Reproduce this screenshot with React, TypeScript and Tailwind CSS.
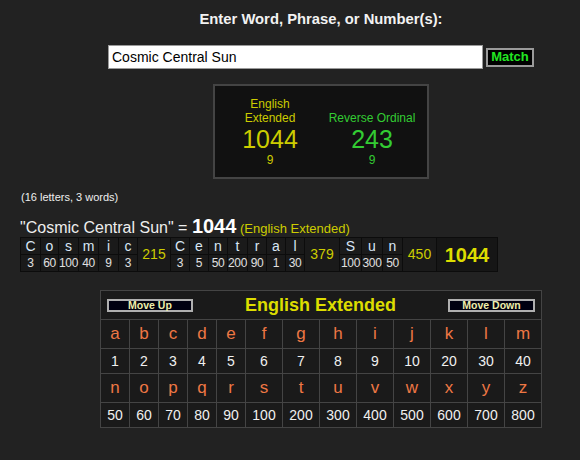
import React from "react";

const font = { fontFamily: '"Liberation Sans", Arial, sans-serif' };

const breakdown: Array<
  | { kind: "l"; ch: string; v: string; w: string }
  | { kind: "s"; v: string; w: string }
> = [
  { kind: "l", ch: "C", v: "3", w: "w-[19px]" },
  { kind: "l", ch: "o", v: "60", w: "w-[17px]" },
  { kind: "l", ch: "s", v: "100", w: "w-[19px]" },
  { kind: "l", ch: "m", v: "40", w: "w-[19px]" },
  { kind: "l", ch: "i", v: "9", w: "w-[19px]" },
  { kind: "l", ch: "c", v: "3", w: "w-[18px]" },
  { kind: "s", v: "215", w: "w-[32px]" },
  { kind: "l", ch: "C", v: "3", w: "w-[18px]" },
  { kind: "l", ch: "e", v: "5", w: "w-[18px]" },
  { kind: "l", ch: "n", v: "50", w: "w-[18px]" },
  { kind: "l", ch: "t", v: "200", w: "w-[19px]" },
  { kind: "l", ch: "r", v: "90", w: "w-[18px]" },
  { kind: "l", ch: "a", v: "1", w: "w-[18px]" },
  { kind: "l", ch: "l", v: "30", w: "w-[18px]" },
  { kind: "s", v: "379", w: "w-[34px]" },
  { kind: "l", ch: "S", v: "100", w: "w-[21px]" },
  { kind: "l", ch: "u", v: "300", w: "w-[20px]" },
  { kind: "l", ch: "n", v: "50", w: "w-[19px]" },
  { kind: "s", v: "450", w: "w-[33px]" },
];

const row1 = "abcdefghijklm".split("");
const row1v = ["1", "2", "3", "4", "5", "6", "7", "8", "9", "10", "20", "30", "40"];
const row2 = "nopqrstuvwxyz".split("");
const row2v = ["50", "60", "70", "80", "90", "100", "200", "300", "400", "500", "600", "700", "800"];

export default function App() {
  return (
    <div
      className="w-[580px] h-[460px] bg-[#222222] text-white overflow-hidden"
      style={font}
    >
      <div className="flex flex-col items-center pl-[62px]">
        <div className="pt-[10px] text-[14.8px] leading-[18px] font-bold text-[#f2f2f2]">
          Enter Word, Phrase, or Number(s):
        </div>
        <div className="mt-[17px] flex items-center gap-[3px]">
          <div className="w-[375px] h-[24px] bg-white border border-[#9a9a9a] flex items-center pl-[3px] text-[14px] text-black">
            Cosmic Central Sun
          </div>
          <div className="w-[48px] h-[19px] bg-black border-2 border-[#9a9a9a] flex items-center justify-center text-[13px] font-bold text-[#22e622]">
            Match
          </div>
        </div>
        <div className="mt-[15px] w-[216px] h-[95px] bg-[#111111] border-2 border-[#444444] pt-[11px]">
          <div className="grid grid-cols-[90px_90px] gap-x-[12px] justify-center text-center">
            <div className="flex flex-col items-center text-[#cccc00]">
              <div className="h-[28px] flex flex-col justify-end text-[12px] leading-[14px]">
                <span>English</span>
                <span>Extended</span>
              </div>
              <div className="text-[25px] leading-[28px]">1044</div>
              <div className="text-[12px] leading-[14px]">9</div>
            </div>
            <div className="flex flex-col items-center text-[#33cc33]">
              <div className="h-[28px] flex flex-col justify-end text-[12px] leading-[14px]">
                <span>Reverse Ordinal</span>
              </div>
              <div className="text-[25px] leading-[28px]">243</div>
              <div className="text-[12px] leading-[14px]">9</div>
            </div>
          </div>
        </div>
      </div>

      <div className="pl-[21px] mt-[12px] text-[11px] leading-[13px] text-[#eeeeee]">
        (16 letters, 3 words)
      </div>
      <div className="pl-[20px] mt-[7px] h-[22px] flex items-baseline text-[16px] text-[#eeeeee] whitespace-pre">
        <span>"Cosmic Central Sun" = </span>
        <span className="text-[20px] font-bold text-white">1044</span>
        <span className="text-[13px] text-[#cccc00]"> (English Extended)</span>
      </div>
      <div className="ml-[20px] mt-[4px] inline-flex bg-[#0c0c0c] p-px gap-px">
        {breakdown.map((c, i) =>
          c.kind === "l" ? (
            <div key={i} className={`flex flex-col gap-px ${c.w}`}>
              <div className="h-[16px] bg-[#1a1a1a] flex items-center justify-center text-[14px] text-[#d8e6f5]">
                {c.ch}
              </div>
              <div className="h-[16px] bg-[#1a1a1a] flex items-center justify-center text-[12px] text-[#e0e0e0] tracking-[-0.3px]">
                {c.v}
              </div>
            </div>
          ) : (
            <div
              key={i}
              className={`${c.w} bg-[#1a1a1a] flex items-center justify-center text-[14px] text-[#cccc00]`}
            >
              {c.v}
            </div>
          )
        )}
        <div className="w-[60px] bg-[#161616] flex items-center justify-center text-[20px] font-bold text-[#dddd00]">
          1044
        </div>
      </div>

      <div className="flex flex-col items-center pl-[62px] mt-[18px]">
        <div className="w-[442px] bg-[#444444] border border-[#444444] flex flex-col gap-px">
          <div className="h-[28px] bg-[#1a1a1a] flex items-center justify-between px-[6px]">
            <div className="w-[86px] h-[13px] bg-[#000010] border-2 border-[#b0b0b0] flex items-center justify-center text-[10.5px] font-bold text-[#eeeeaa] leading-none">
              Move Up
            </div>
            <div className="text-[18px] font-bold text-[#dddd00] leading-none">
              English Extended
            </div>
            <div className="w-[87px] h-[13px] bg-[#000010] border-2 border-[#b0b0b0] flex items-center justify-center text-[10.5px] font-bold text-[#eeeeaa] leading-none">
              Move Down
            </div>
          </div>
          {[
            [row1, "l"],
            [row1v, "n"],
            [row2, "l"],
            [row2v, "n"],
          ].map(([cells, kind], r) => (
            <div
              key={r}
              className="grid grid-cols-[28px_28px_28px_28px_28px_36px_36px_36px_36px_36px_36px_36px_36px] gap-px"
            >
              {(cells as string[]).map((t, i) => (
                <div
                  key={i}
                  className={
                    kind === "l"
                      ? "h-[28px] bg-[#1a1a1a] flex items-center justify-center text-[17px] text-[#ee7744]"
                      : "h-[24px] bg-[#1a1a1a] flex items-center justify-center text-[14px] text-[#f0f0f0]"
                  }
                >
                  {t}
                </div>
              ))}
            </div>
          ))}
        </div>
      </div>
    </div>
  );
}
